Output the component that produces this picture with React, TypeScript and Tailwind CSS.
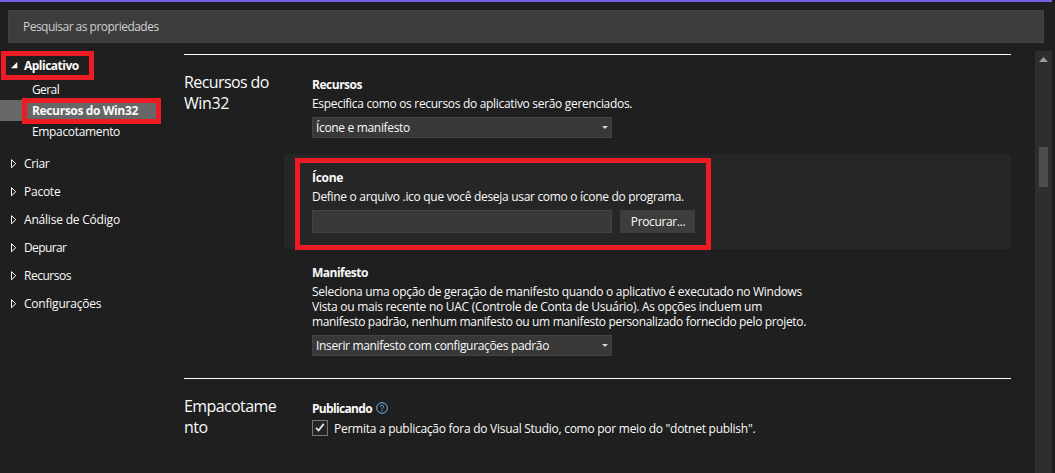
import type { ReactNode } from "react";

const categories = [
  { label: "Criar", tracking: "tracking-[-0.35px]" },
  { label: "Pacote", tracking: "tracking-[-0.25px]" },
  { label: "Análise de Código", tracking: "tracking-[-0.2px]" },
  { label: "Depurar", tracking: "tracking-[-0.6px]" },
  { label: "Recursos", tracking: "tracking-[-0.48px]" },
  { label: "Configurações", tracking: "tracking-[-0.22px]" },
];

function Highlight({ className }: { className: string }) {
  return <div className={`pointer-events-none absolute border-5 border-[#ed1c24] ${className}`} />;
}

function Sidebar() {
  return (
    <nav className="w-[184px] shrink-0">
      <div className="relative flex h-7 items-center pl-[11px]">
        <svg width="7" height="7" viewBox="0 0 7 7" className="mr-[6px] shrink-0" fill="#fff">
          <path d="M6.3 0V6.3H0Z" />
        </svg>
        <span className="font-bold tracking-[-0.5px]">Aplicativo</span>
        <Highlight className="top-0 left-px h-[29px] w-[93px]" />
      </div>
      <div className="flex h-[21px] items-center pl-8">
        <span className="tracking-[-0.6px]">Geral</span>
      </div>
      <div className="relative flex h-[21px] w-[157px] items-center bg-[#676767] pl-8">
        <span className="font-bold tracking-[-0.36px]">Recursos do Win32</span>
        <Highlight className="-top-[2px] left-[22px] h-[26px] w-[139px]" />
      </div>
      <div className="flex h-[21px] items-center pl-8">
        <span className="tracking-[-0.34px]">Empacotamento</span>
      </div>
      <div className="mt-2">
        {categories.map((c) => (
          <div key={c.label} className="flex h-7 items-center pl-[11px]">
            <svg width="6" height="10" viewBox="0 0 6 10" className="mr-[7px] shrink-0" fill="none" stroke="#fff">
              <path d="M.5 .7V8.7L4.8 4.7Z" />
            </svg>
            <span className={`pb-[2px] ${c.tracking}`}>{c.label}</span>
          </div>
        ))}
      </div>
    </nav>
  );
}

function Select({ children }: { children: ReactNode }) {
  return (
    <div className="flex h-[21px] w-[300px] items-center justify-between border border-[#434343] bg-[#383838] pr-[3px] pl-[3px]">
      {children}
      <svg width="6" height="3" viewBox="0 0 6 3" fill="#d6d6d6">
        <path d="M0 0H6L3 3Z" />
      </svg>
    </div>
  );
}

function Property({ title, children, className = "" }: { title: ReactNode; children: ReactNode; className?: string }) {
  return (
    <div className={`relative pt-[15px] pb-4 pl-7 ${className}`}>
      <div className="flex h-[17px] items-center pb-px font-bold">{title}</div>
      {children}
    </div>
  );
}

function Section({ title, children }: { title: ReactNode; children: ReactNode }) {
  return (
    <section className="mb-[6px] flex border-t border-white">
      <h2 className="w-[100px] shrink-0 pt-[17px] text-[16px] leading-[21px]">{title}</h2>
      <div className="flex-1 pt-[6px]">{children}</div>
    </section>
  );
}

export default function App() {
  return (
    <div className="flex h-[473px] w-[1055px] overflow-hidden bg-[#1f1f1f] font-['Open_Sans','Noto_Sans',sans-serif] text-[12px] leading-[15px] whitespace-nowrap text-[#fafafa]">
      <div className="flex w-[1052px] flex-col">
        <div className="h-[2px] shrink-0 bg-[#7160e8]" />
        <div className="mt-2 ml-2 flex h-[33px] w-[1036px] shrink-0 items-center border border-[#434343] bg-[#3d3d3d] pl-[14px] text-[#cfcfcf]">
          <span className="tracking-[-0.52px]">Pesquisar as propriedades</span>
        </div>
        <div className="mt-2 flex min-h-0 flex-1">
          <Sidebar />
          <main className="w-[827px] shrink-0 pt-[3px]">
            <Section
              title={
                <>
                  <div className="tracking-[-0.6px]">Recursos do</div>
                  <div className="tracking-[-0.4px]">Win32</div>
                </>
              }
            >
              <Property title={<span className="tracking-[-0.48px]">Recursos</span>}>
                <p className="mt-[3px] mb-[6px] tracking-[-0.315px]">
                  Especifica como os recursos do aplicativo serão gerenciados.
                </p>
                <Select>
                  <span className="tracking-[-0.33px]">Ícone e manifesto</span>
                </Select>
              </Property>
              <Property className="bg-[#262626]" title={<span className="tracking-[-0.3px]">Ícone</span>}>
                <p className="mt-[3px] mb-[6px] tracking-[-0.303px]">
                  Define o arquivo .ico que você deseja usar como o ícone do programa.
                </p>
                <div className="flex gap-2">
                  <div className="h-[23px] w-[300px] border border-[#434343] bg-[#383838]" />
                  <div className="flex h-[23px] w-[75px] items-center justify-center bg-[#3d3d3d]">
                    <span className="pl-px tracking-[-0.36px]">Procurar...</span>
                  </div>
                </div>
                <Highlight className="top-[4px] left-[11px] h-[92px] w-[416px]" />
              </Property>
              <Property title={<span className="tracking-[-0.5px]">Manifesto</span>}>
                <div className="mt-[3px] mb-[6px]">
                  <p className="tracking-[-0.302px]">
                    Seleciona uma opção de geração de manifesto quando o aplicativo é executado no Windows
                  </p>
                  <p className="tracking-[-0.273px]">
                    Vista ou mais recente no UAC (Controle de Conta de Usuário). As opções incluem um
                  </p>
                  <p className="tracking-[-0.34px]">
                    manifesto padrão, nenhum manifesto ou um manifesto personalizado fornecido pelo projeto.
                  </p>
                </div>
                <Select>
                  <span className="tracking-[-0.335px]">Inserir manifesto com configurações padrão</span>
                </Select>
              </Property>
            </Section>
            <Section
              title={
                <>
                  <div className="tracking-[-0.6px]">Empacotame</div>
                  <div className="tracking-[-0.5px]">nto</div>
                </>
              }
            >
              <Property
                title={
                  <>
                    <span className="tracking-[-0.67px]">Publicando</span>
                    <svg width="12" height="12" viewBox="0 0 12 12" className="ml-1" fill="none" stroke="#6cb4ee">
                      <circle cx="6" cy="6" r="5.3" />
                      <path d="M4.4 4.8C4.4 2.7 7.6 2.7 7.6 4.7C7.6 5.8 6 5.8 6 7.2M6 8.1V9.2" />
                    </svg>
                  </>
                }
              >
                <div className="mt-[3px] flex h-4 items-center gap-[6px]">
                  <div className="flex size-4 items-center justify-center border border-[#767676] bg-[#262626]">
                    <svg width="10" height="10" viewBox="0 0 10 10" fill="none" stroke="#e6e6e6" strokeWidth="1.8">
                      <path d="M1 4.9L3.6 7.5L8.7 .9" />
                    </svg>
                  </div>
                  <span className="pt-px tracking-[-0.265px]">
                    Permita a publicação fora do Visual Studio, como por meio do "dotnet publish".
                  </span>
                </div>
              </Property>
            </Section>
          </main>
          <div className="ml-6 flex w-[17px] shrink-0 flex-col items-center bg-[#2e2e2e] pt-[6px]">
            <svg width="9" height="5" viewBox="0 0 9 5" fill="#999">
              <path d="M4.5 0L9 5H0Z" />
            </svg>
            <div className="mt-[85px] h-10 w-[9px] bg-[#4d4d4d]" />
          </div>
        </div>
      </div>
    </div>
  );
}
